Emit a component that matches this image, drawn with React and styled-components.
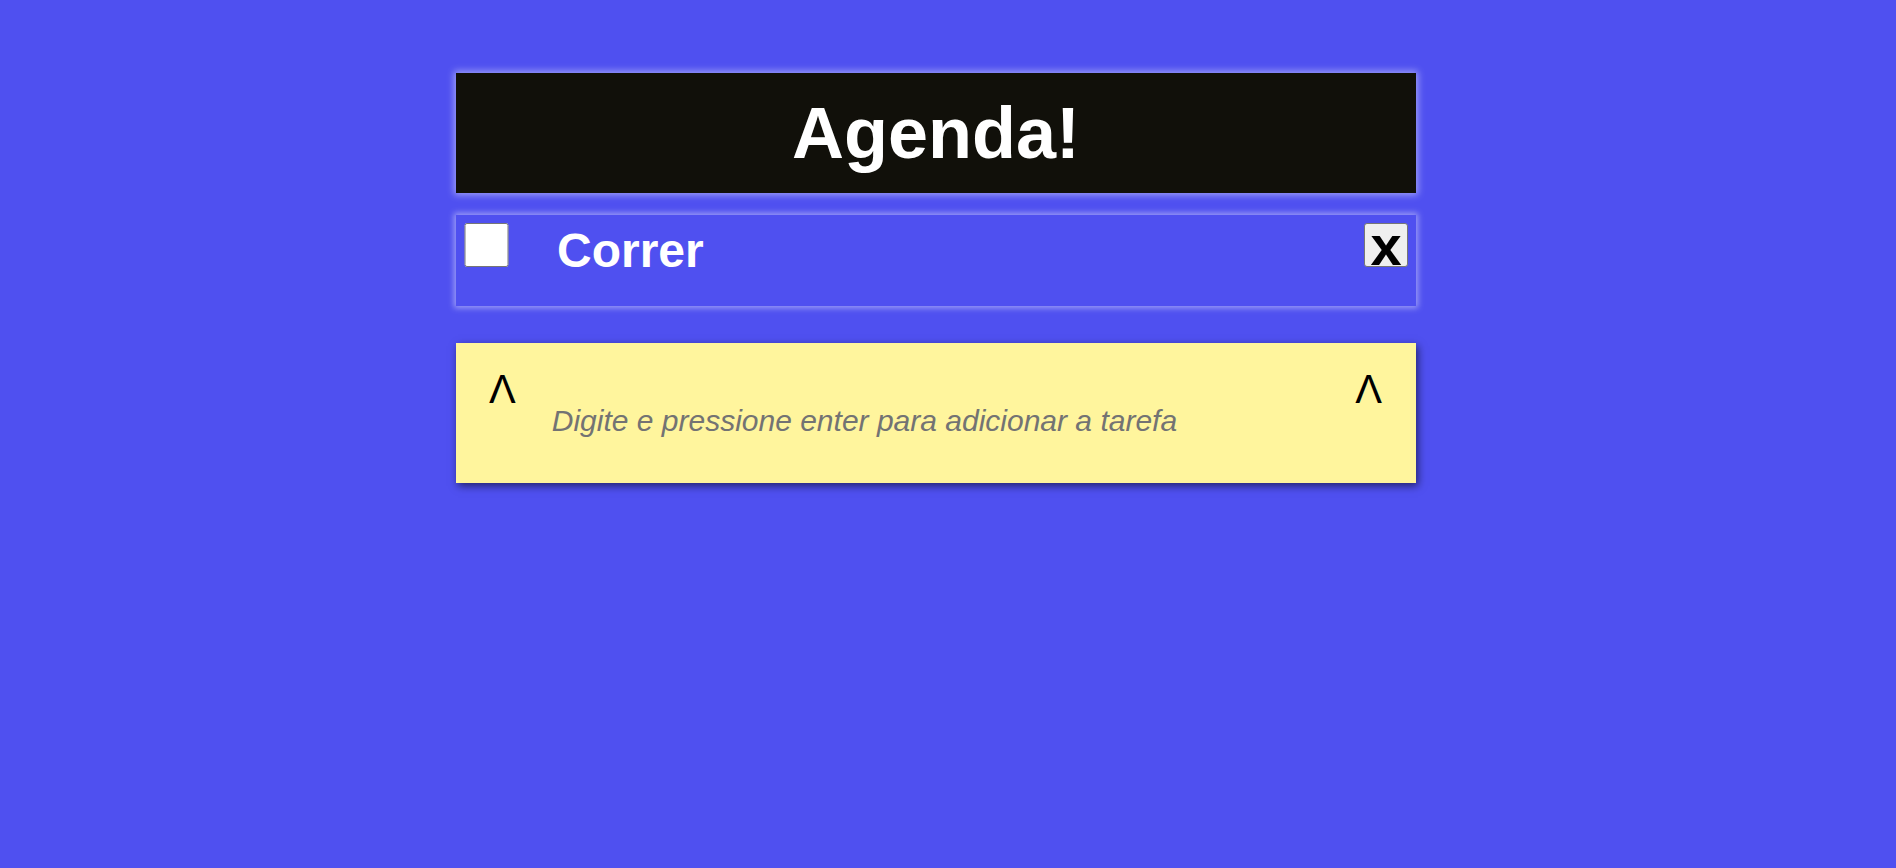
import React, { useState } from "react";
import styled, { createGlobalStyle } from "styled-components";

const GlobalStyle = createGlobalStyle`
  html, body {
    margin: 0;
    padding: 0;
    background-color: #4f50f0;
    font-family: "Liberation Sans", Arial, sans-serif;
    min-height: 868px;
  }
`;

const Page = styled.div`
  width: 960px;
  margin: 73px 0 0 456px;
  display: flex;
  flex-direction: column;
`;

const Header = styled.header`
  height: 120px;
  background-color: #11100a;
  box-shadow: 0 0 7px 2px rgba(255, 255, 255, 0.45);
  display: flex;
  align-items: center;
  justify-content: center;
`;

const Title = styled.h1`
  margin: 0;
  color: #ffffff;
  font-size: 72px;
  font-weight: bold;
`;

const List = styled.ul`
  list-style: none;
  margin: 22px 0 0;
  padding: 0;
`;

const Item = styled.li`
  box-sizing: border-box;
  height: 91px;
  padding: 8px;
  display: flex;
  align-items: flex-start;
  box-shadow: 0 0 6px 2px rgba(255, 255, 255, 0.45);
`;

const Check = styled.input`
  width: 45px;
  height: 44px;
  margin: 0;
  flex-shrink: 0;
`;

const Label = styled.span`
  margin-left: 48px;
  flex: 1;
  color: #ffffff;
  font-size: 48px;
  font-weight: bold;
  text-decoration: ${(p) => (p.$done ? "line-through" : "none")};
`;

const Remove = styled.button`
  width: 44px;
  height: 44px;
  padding: 0;
  font-family: "Liberation Sans", Arial, sans-serif;
  font-size: 56px;
  font-weight: bold;
  line-height: 44px;
  color: #000000;
  background-color: #efefef;
  border: 1px solid #767676;
  border-radius: 3px;
  overflow: visible;
  cursor: pointer;
`;

const Form = styled.form`
  box-sizing: border-box;
  margin-top: 37px;
  height: 140px;
  padding: 24px 34px 0 33px;
  background-color: #fff59d;
  box-shadow: 2px 3px 8px rgba(0, 0, 0, 0.55);
  display: flex;
  align-items: flex-start;
`;

const Arrow = styled.span`
  font-size: 40px;
  color: #000000;
  line-height: normal;
`;

const Field = styled.input`
  flex: 1;
  margin: 37px 37px 0 36px;
  padding: 0;
  border: none;
  outline: none;
  background: transparent;
  font-family: "Liberation Sans", Arial, sans-serif;
  font-size: 30px;
  font-style: italic;
  color: #333;
  &::placeholder {
    color: #737373;
  }
`;

export default function App() {
  const [tasks, setTasks] = useState([{ id: 1, text: "Correr", done: false }]);
  const [text, setText] = useState("");

  const add = (e) => {
    e.preventDefault();
    if (!text.trim()) return;
    setTasks([...tasks, { id: Date.now(), text, done: false }]);
    setText("");
  };

  return (
    <>
      <GlobalStyle />
      <Page>
        <Header>
          <Title>Agenda!</Title>
        </Header>
        <List>
          {tasks.map((t) => (
            <Item key={t.id}>
              <Check
                type="checkbox"
                checked={t.done}
                onChange={() =>
                  setTasks(tasks.map((x) => (x.id === t.id ? { ...x, done: !x.done } : x)))
                }
              />
              <Label $done={t.done}>{t.text}</Label>
              <Remove onClick={() => setTasks(tasks.filter((x) => x.id !== t.id))}>x</Remove>
            </Item>
          ))}
        </List>
        <Form onSubmit={add}>
          <Arrow>Λ</Arrow>
          <Field
            value={text}
            onChange={(e) => setText(e.target.value)}
            placeholder="Digite e pressione enter para adicionar a tarefa"
          />
          <Arrow>Λ</Arrow>
        </Form>
      </Page>
    </>
  );
}
